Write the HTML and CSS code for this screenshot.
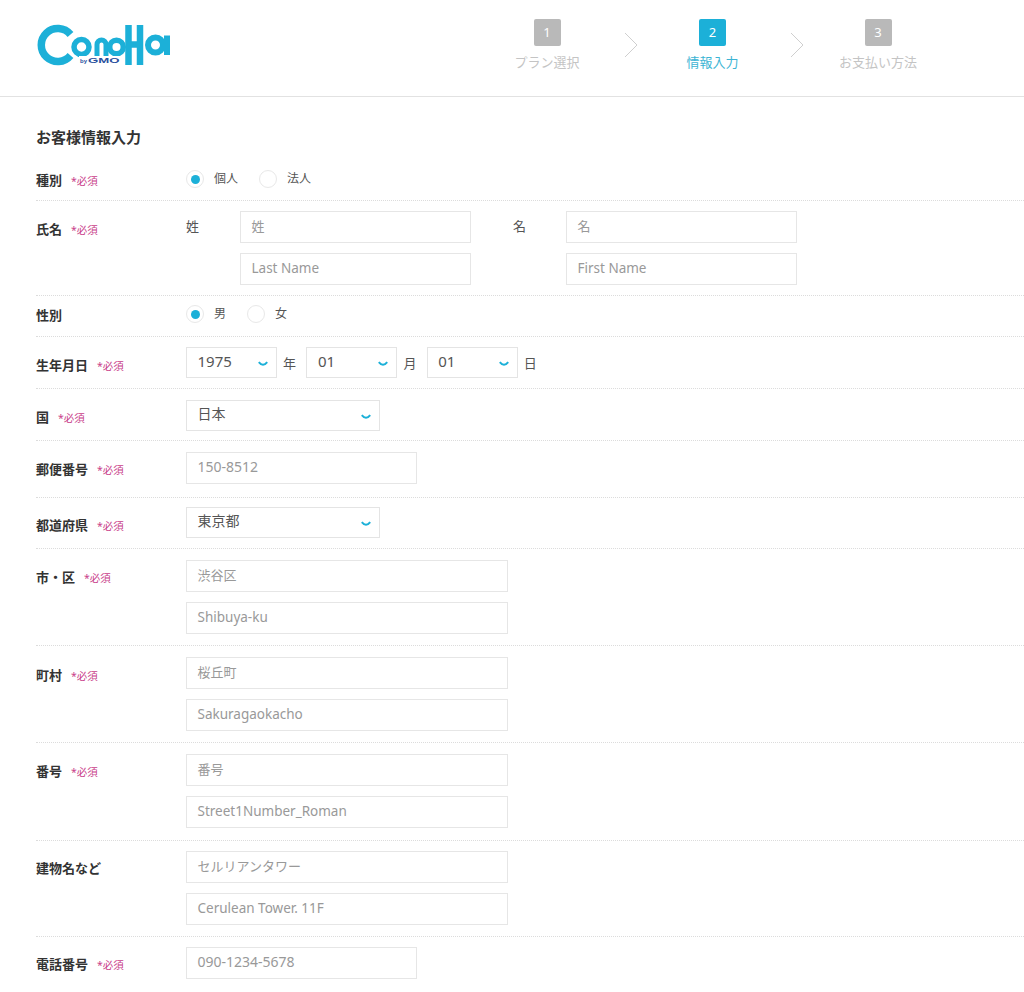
FILE: index.html
```html
<!DOCTYPE html>
<html lang="ja">
<head>
<meta charset="utf-8">
<title>お客様情報入力</title>
<link rel="stylesheet" href="styles.css">
</head>
<body>
<header class="header">
  <div class="logo" aria-label="ConoHa by GMO">
    <svg class="logo-mark" width="140" height="46" viewBox="36 22 140 46" aria-hidden="true">
      <g fill="none" stroke="#1cb0d8">
        <path d="M70.500 34.500A16.500 16.500 0 1 0 70.500 55.500" stroke-width="7.500"/>
        <circle cx="81.500" cy="47" r="7.500" stroke-width="5.500"/>
        <path d="M97 57V44.500a4.500 4.500 0 0 1 9 0V57" stroke-width="5"/>
        <circle cx="116.500" cy="47" r="6.800" stroke-width="5.500"/>
        <path d="M128.500 25V65M140 25V65M128 44.500H140" stroke-width="6.500"/>
        <circle cx="155.500" cy="45" r="7.500" stroke-width="6"/>
        <path d="M167 35.500V55" stroke-width="6"/>
      </g>
    </svg>
    <span class="logo-by"><small>by</small><b>GMO</b></span>
  </div>
  <ol class="steps">
    <li class="step"><span class="step-num">1</span><span class="step-name">プラン選択</span></li>
    <li class="step-arrow"><svg width="14" height="26" viewBox="0 0 14 26" aria-hidden="true"><path d="M1 1l12 12L1 25" fill="none" stroke="#cfcfcf" stroke-width="1"/></svg></li>
    <li class="step step-current"><span class="step-num">2</span><span class="step-name">情報入力</span></li>
    <li class="step-arrow"><svg width="14" height="26" viewBox="0 0 14 26" aria-hidden="true"><path d="M1 1l12 12L1 25" fill="none" stroke="#cfcfcf" stroke-width="1"/></svg></li>
    <li class="step"><span class="step-num">3</span><span class="step-name">お支払い方法</span></li>
  </ol>
</header>

<main class="form">
  <h1 class="form-title">お客様情報入力</h1>

  <div class="row row-first">
    <div class="label">種別<em>*必須</em></div>
    <div class="radios">
      <span class="radio radio-on"></span><span class="radio-text">個人</span>
      <span class="radio"></span><span class="radio-text">法人</span>
    </div>
  </div>

  <div class="row row-tight">
    <div class="label">氏名<em>*必須</em></div>
    <div class="name-grid">
      <span class="name-label">姓</span>
      <div class="stack">
        <div class="field field-ja w-name">姓</div>
        <div class="field w-name">Last Name</div>
      </div>
      <span class="name-label name-label-second">名</span>
      <div class="stack">
        <div class="field field-ja w-name">名</div>
        <div class="field w-name">First Name</div>
      </div>
    </div>
  </div>

  <div class="row row-gender">
    <div class="label">性別</div>
    <div class="radios">
      <span class="radio radio-on"></span><span class="radio-text">男</span>
      <span class="radio"></span><span class="radio-text">女</span>
    </div>
  </div>

  <div class="row row-date">
    <div class="label">生年月日<em>*必須</em></div>
    <div class="date">
      <div class="select w-date">1975<svg class="chev" width="10" height="6" viewBox="0 0 10 6" aria-hidden="true"><path d="M.8 1.200Q5 6.500 9.200 1.200" fill="none" stroke="#1cb0d8" stroke-width="2"/></svg></div><span class="date-unit">年</span>
      <div class="select w-date">01<svg class="chev" width="10" height="6" viewBox="0 0 10 6" aria-hidden="true"><path d="M.8 1.200Q5 6.500 9.200 1.200" fill="none" stroke="#1cb0d8" stroke-width="2"/></svg></div><span class="date-unit">月</span>
      <div class="select w-date">01<svg class="chev" width="10" height="6" viewBox="0 0 10 6" aria-hidden="true"><path d="M.8 1.200Q5 6.500 9.200 1.200" fill="none" stroke="#1cb0d8" stroke-width="2"/></svg></div><span class="date-unit">日</span>
    </div>
  </div>

  <div class="row row-country">
    <div class="label label-up">国<em>*必須</em></div>
    <div class="select w-sel">日本<svg class="chev" width="10" height="6" viewBox="0 0 10 6" aria-hidden="true"><path d="M.8 1.200Q5 6.500 9.200 1.200" fill="none" stroke="#1cb0d8" stroke-width="2"/></svg></div>
  </div>

  <div class="row row-postal">
    <div class="label label-up">郵便番号<em>*必須</em></div>
    <div class="field field-num w-mid">150-8512</div>
  </div>

  <div class="row row-pref">
    <div class="label">都道府県<em>*必須</em></div>
    <div class="select w-sel">東京都<svg class="chev" width="10" height="6" viewBox="0 0 10 6" aria-hidden="true"><path d="M.8 1.200Q5 6.500 9.200 1.200" fill="none" stroke="#1cb0d8" stroke-width="2"/></svg></div>
  </div>

  <div class="row">
    <div class="label label-up">市・区<em>*必須</em></div>
    <div class="stack">
      <div class="field field-ja w-wide">渋谷区</div>
      <div class="field w-wide">Shibuya-ku</div>
    </div>
  </div>

  <div class="row">
    <div class="label">町村<em>*必須</em></div>
    <div class="stack">
      <div class="field field-ja w-wide">桜丘町</div>
      <div class="field w-wide">Sakuragaokacho</div>
    </div>
  </div>

  <div class="row row-street">
    <div class="label label-up">番号<em>*必須</em></div>
    <div class="stack">
      <div class="field field-ja w-wide">番号</div>
      <div class="field w-wide">Street1Number_Roman</div>
    </div>
  </div>

  <div class="row row-building">
    <div class="label label-up">建物名など</div>
    <div class="stack">
      <div class="field field-ja w-wide">セルリアンタワー</div>
      <div class="field w-wide">Cerulean Tower. 11F</div>
    </div>
  </div>

  <div class="row row-last">
    <div class="label label-up">電話番号<em>*必須</em></div>
    <div class="field field-num w-mid">090-1234-5678</div>
  </div>
</main>
</body>
</html>
```

FILE: styles.css
```css
* { box-sizing: border-box; }

html, body { margin: 0; padding: 0; background: #fff; }

body {
  font-family: "Noto Sans", "Noto Sans CJK JP", sans-serif;
  font-size: 14px;
  color: #555;
}

.header {
  height: 97px;
  border-bottom: 1px solid #e2e2e2;
  display: flex;
  justify-content: space-between;
  padding: 19px 86px 0 36px;
}

.logo { position: relative; width: 140px; height: 46px; margin-top: 3px; }
.logo-mark { display: block; }
.logo-by {
  position: absolute;
  left: 43px;
  top: 34px;
  width: 42px;
  height: 10px;
  background: #fff;
  font: 700 8px/10px "Liberation Sans", sans-serif;
  color: #2a4f9e;
  white-space: nowrap;
}
.logo-by small { font-size: 6px; margin: 0 1px; }
.logo-by b { display: inline-block; transform: scaleX(1.65); transform-origin: left center; }

.steps {
  list-style: none;
  margin: 0;
  padding: 0;
  display: flex;
  align-items: flex-start;
}
.step {
  width: 120px;
  display: flex;
  flex-direction: column;
  align-items: center;
}
.step-num {
  width: 27px;
  height: 27px;
  border-radius: 2px;
  background: #b9b9b9;
  color: #fff;
  font-size: 13px;
  line-height: 27px;
  text-align: center;
}
.step-name { margin-top: 5px; font-size: 13px; line-height: 22px; color: #c4c4c4; }
.step-current .step-num { background: #1cb0d8; }
.step-current .step-name { color: #3cb4d4; }
.step-arrow { width: 45.5px; padding: 13px 0 0 17px; line-height: 0; }

.form { padding-left: 36px; }

.form-title {
  margin: 0;
  padding-top: 31px;
  height: 53px;
  font-size: 15px;
  line-height: 18px;
  font-weight: 700;
  color: #333;
}

.row {
  display: flex;
  align-items: flex-start;
  padding: 11px 0;
  border-bottom: 1px dotted #dcdcdc;
}
.row-first { padding: 18px 0 0; height: 51px; }
.row-gender { padding: 7px 0 0; height: 41px; }
.row-tight { padding: 10px 0; }
.row-date { padding: 10px 0 9px; }
.row-country { padding: 11px 0 9px; }
.row-postal { padding: 11px 0 13px; }
.row-pref { padding: 9px 0 10px; }
.row-street { padding: 11px 0 12px; }
.row-building { padding: 10px 0 11px; }
.row-last { padding: 10px 0 11px; border-bottom: 0; }

.label {
  flex: none;
  width: 150px;
  padding-top: 8px;
  font-size: 13px;
  line-height: 20px;
  font-weight: 700;
  color: #333;
}
.label-up { padding-top: 7px; }
.row-first .label, .row-gender .label { padding-top: 2px; }
.label em {
  margin-left: 9px;
  font-size: 10.5px;
  font-style: normal;
  font-weight: 400;
  color: #c9408a;
}

.stack { display: flex; flex-direction: column; gap: 10px; }

.field, .select {
  flex: none;
  height: 32px;
  border: 1px solid #e6e6e6;
  padding: 0 10.500px;
  line-height: 28px;
  font-size: 13.500px;
  color: #999;
  background: #fff;
}
.field-ja { font-size: 13px; }
.field-num { font-size: 14px; }
.select {
  height: 31px;
  position: relative;
  color: #555;
  font-size: 14px;
  line-height: 25px;
  border-color: #e4e4e4;
}
.chev { position: absolute; right: 8px; top: 13px; }

.w-name { width: 231px; }
.w-wide { width: 322px; }
.w-mid { width: 231px; }
.w-sel { width: 194px; }
.w-date { width: 91px; font-size: 15px; line-height: 26px; }

.radios { display: flex; align-items: center; height: 22px; font-size: 12px; }
.radio {
  width: 18px;
  height: 18px;
  border-radius: 50%;
  border: 1px solid #e8e8e8;
  background: #fff;
  display: flex;
  align-items: center;
  justify-content: center;
}
.radio-on::before {
  content: "";
  width: 9px;
  height: 9px;
  border-radius: 50%;
  background: #1cb0d8;
}
.radio-text { margin: 0 21px 0 10px; line-height: 20px; color: #555; }

.name-grid { display: flex; align-items: flex-start; }
.name-label { width: 54px; font-size: 13px; line-height: 30px; color: #555; }
.name-label-second { margin-left: 42px; width: 53px; }

.date { display: flex; align-items: flex-start; }
.date-unit { width: 29.400px; padding-left: 6px; font-size: 13px; line-height: 32px; color: #555; }
```
